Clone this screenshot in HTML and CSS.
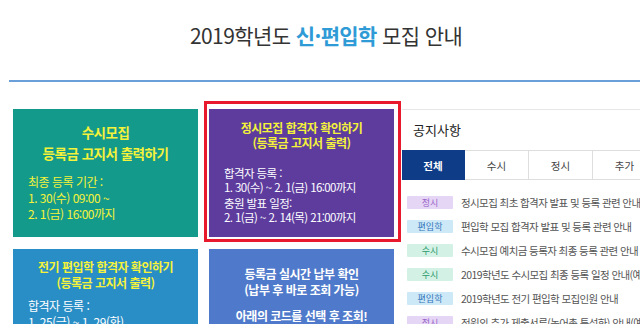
FILE: index.html
```html
<!DOCTYPE html>
<html lang="ko">
<head>
<meta charset="utf-8">
<title>2019학년도 신·편입학 모집 안내</title>
<link rel="stylesheet" href="styles.css">
</head>
<body>
<div class="page">
  <header class="header">
    <h1 class="title">2019학년도 <strong>신·편입학</strong> 모집 안내</h1>
  </header>
  <div class="rule"></div>
  <main class="main">
    <div class="cards">
      <a class="card card-teal">
        <div class="card-title big">수시모집<br>등록금 고지서 출력하기</div>
        <div class="card-body teal-body">최종 등록 기간 :<br>1. 30(수) 09:00 ~<br>2. 1(금) 16:00까지</div>
      </a>
      <a class="card card-purple">
        <div class="card-title">정시모집 합격자 확인하기<br>(등록금 고지서 출력)</div>
        <div class="card-body purple-body">
          <p>합격자 등록 :<br>1. 30(수) ~ 2. 1(금) 16:00까지</p>
          <p>충원 발표 일정:<br>2. 1(금) ~ 2. 14(목) 21:00까지</p>
        </div>
      </a>
      <a class="card card-blue">
        <div class="card-title">전기 편입학 합격자 확인하기<br>(등록금 고지서 출력)</div>
        <div class="card-body blue-body">합격자 등록 :<br>1. 25(금) ~ 1. 29(화)</div>
      </a>
      <a class="card card-indigo">
        <div class="card-title white">등록금 실시간 납부 확인<br>(납부 후 바로 조회 가능)</div>
        <div class="card-title white gap">아래의 코드를 선택 후 조회!</div>
      </a>
    </div>
    <section class="notice">
      <h2 class="notice-title">공지사항</h2>
      <div class="tabs">
        <span class="tab active">전체</span>
        <span class="tab">수시</span>
        <span class="tab">정시</span>
        <span class="tab">추가</span>
      </div>
      <ul class="list">
        <li class="item"><span class="badge b-jeong">정시</span><span class="text">정시모집 최초 합격자 발표 및 등록 관련 안내</span></li>
        <li class="item"><span class="badge b-pyeon">편입학</span><span class="text">편입학 모집 합격자 발표 및 등록 관련 안내</span></li>
        <li class="item"><span class="badge b-susi">수시</span><span class="text">수시모집 예치금 등록자 최종 등록 관련 안내</span></li>
        <li class="item"><span class="badge b-susi">수시</span><span class="text">2019학년도 수시모집 최종 등록 일정 안내(예치금 등록자)</span></li>
        <li class="item"><span class="badge b-pyeon">편입학</span><span class="text">2019학년도 전기 편입학 모집인원 안내</span></li>
        <li class="item"><span class="badge b-jeong">정시</span><span class="text">정원외 추가 제출서류(농어촌 특성화) 안내(예시)</span></li>
      </ul>
    </section>
  </main>
</div>
</body>
</html>
```

FILE: styles.css
```css
html, body {
  margin: 0;
  padding: 0;
  overflow: hidden;
  background: #fff;
}
body {
  font-family: "Noto Sans CJK KR", "Noto Sans", sans-serif;
  color: #333;
}
.page {
  width: 1100px;
}
.header {
  padding: 20px 0 0 190px;
  height: 60px;
}
.title {
  margin: 0;
  font-size: 21px;
  line-height: 30px;
  font-weight: 400;
  letter-spacing: -0.6px;
  color: #333;
}
.title strong {
  color: #2f9bd6;
  font-weight: 700;
}
.rule {
  margin-left: 9px;
  height: 2px;
  background: #6a9fd9;
}
.main {
  display: flex;
  align-items: flex-start;
  padding: 27px 0 0 13px;
}
.cards {
  display: grid;
  grid-template-columns: 185px 185px;
  grid-auto-rows: 128px;
  column-gap: 11px;
  row-gap: 12px;
  flex-shrink: 0;
}
.card {
  display: block;
  position: relative;
  color: #fff;
  text-decoration: none;
}
.card-teal { background: #149a8b; padding-top: 13px; }
.card-purple { background: #5d3c9e; padding-top: 11px; }
.card-blue { background: #2a8ec6; padding-top: 10px; }
.card-indigo { background: #4f7acb; padding-top: 17px; }
.card-purple::after {
  content: "";
  position: absolute;
  top: -8px;
  left: -5px;
  right: -7px;
  bottom: -5px;
  border: 3px solid #e8192c;
  pointer-events: none;
}
.card-title {
  text-align: center;
  color: #f4f23a;
  font-size: 12px;
  line-height: 15px;
  font-weight: 700;
  letter-spacing: -0.5px;
}
.card-title.big {
  font-size: 13.5px;
  line-height: 21px;
}
.card-blue .card-title { line-height: 16px; }
.card-title.white {
  color: #fff;
  line-height: 16px;
}
.card-title.gap { margin-top: 10px; }
.card-body {
  padding-left: 15px;
  font-size: 12px;
  letter-spacing: -0.5px;
}
.teal-body {
  color: #f4f23a;
  margin-top: 10px;
  line-height: 16px;
}
.purple-body {
  margin-top: 16px;
  line-height: 14px;
  font-size: 11.5px;
  letter-spacing: -0.6px;
}
.purple-body p { margin: 0; }
.purple-body p + p { margin-top: 2px; }
.blue-body {
  margin-top: 7px;
  line-height: 16px;
}
.notice {
  margin-left: 8px;
  width: 420px;
  flex-shrink: 0;
  border-top: 1px solid #e6e6e6;
  background: #fff;
}
.notice-title {
  margin: 0;
  padding: 11px 0 11px 11px;
  font-size: 13px;
  line-height: 18px;
  font-weight: 400;
  color: #222;
}
.tabs {
  display: flex;
  height: 30px;
  border-top: 1px solid #dedede;
  border-bottom: 1px solid #dedede;
  box-sizing: border-box;
}
.tab {
  width: 64px;
  display: flex;
  align-items: center;
  justify-content: center;
  font-size: 10.5px;
  color: #444;
  border-right: 1px solid #dedede;
  box-sizing: border-box;
}
.tab.active {
  width: 63px;
  background: #0f3c87;
  color: #fff;
  font-weight: 700;
  margin-top: -1px;
  margin-bottom: -1px;
  border-right-color: #0f3c87;
}
.list {
  list-style: none;
  margin: 0;
  padding: 10px 0 0 0;
}
.item {
  display: flex;
  align-items: center;
  height: 24px;
  white-space: nowrap;
}
.badge {
  margin-left: 5px;
  width: 46px;
  height: 13px;
  line-height: 13px;
  text-align: center;
  font-size: 9px;
  border-radius: 1px;
  flex-shrink: 0;
}
.b-jeong { background: #e6d6f6; color: #9966c8; }
.b-pyeon { background: #cde9f7; color: #3376bb; }
.b-susi { background: #d3f2e5; color: #2e9a6c; }
.text {
  margin-left: 8px;
  font-size: 10.5px;
  letter-spacing: -0.6px;
  color: #555;
}
```
